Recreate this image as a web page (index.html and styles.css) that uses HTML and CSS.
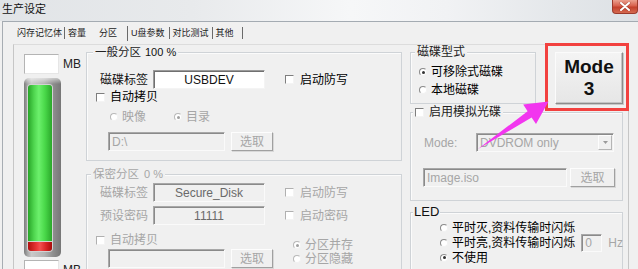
FILE: index.html
```html
<!DOCTYPE html>
<html>
<head>
<meta charset="utf-8">
<link rel="stylesheet" href="styles.css">
</head>
<body>
<div class="titlebar">
  <span class="title">生产设定</span>
  <span class="close"><svg width="12" height="9" viewBox="0 0 12 9"><path d="M2 1 L10 8 M10 1 L2 8" stroke="#5a1a12" stroke-width="3" stroke-linecap="round" opacity=".35"/><path d="M2 1 L10 8 M10 1 L2 8" stroke="#fff" stroke-width="2" stroke-linecap="round"/></svg></span>
</div>
<div class="window">
  <div class="tabs">
    <span class="tab t1">闪存记忆体</span><span class="sep s1"></span>
    <span class="tab t2">容量</span>
    <span class="tab t3">分区</span><span class="sep s3"></span>
    <span class="tab t4">U盘参数</span><span class="sep s4"></span>
    <span class="tab t5">对比测试</span><span class="sep s5"></span>
    <span class="tab t6">其他</span><span class="sep s6"></span>
  </div>
  <div class="page">
    <div class="leftcol">
      <div class="mbrow"><span class="mbbox"></span><span class="mb">MB</span></div>
      <div class="bar"><div class="bar-green"></div><div class="bar-red"></div></div>
      <div class="mbrow mb-bottom"><span class="mbbox"></span><span class="mb">MB</span></div>
    </div>

    <div class="midcol">
      <div class="group g-general">
        <div class="legend lg-general">一般分区 <span class="pct">100 %</span></div>
        <div class="row r-label first">
          <span class="lbl">磁碟标签</span>
          <span class="input in-label">USBDEV</span>
          <span class="opt chk-opt"><i class="chk"></i><span>启动防写</span></span>
        </div>
        <div class="row r-check">
          <span class="opt auto-copy"><i class="chk"></i><span>自动拷贝</span></span>
        </div>
        <div class="row r-radio dis">
          <span class="opt rad-1"><i class="radio"></i><span>映像</span></span>
          <span class="opt rad-2"><i class="radio on"></i><span>目录</span></span>
        </div>
        <div class="row r-path">
          <span class="input dis in-path">D:\</span>
          <span class="btn dis">选取</span>
        </div>
      </div>

      <div class="group g-secure dis">
        <div class="legend lg-secure">保密分区 <span>0 %</span></div>
        <div class="row r-label sec-first">
          <span class="lbl">磁碟标签</span>
          <span class="input dis in-label ro">Secure_Disk</span>
          <span class="opt chk-opt"><i class="chk"></i><span>启动防写</span></span>
        </div>
        <div class="row r-label sec-second">
          <span class="lbl">预设密码</span>
          <span class="input dis in-label ro">11111</span>
          <span class="opt chk-opt"><i class="chk"></i><span>启动密码</span></span>
        </div>
        <div class="sec-bottom">
          <div class="sec-left">
            <div class="row r-check">
              <span class="opt auto-copy"><i class="chk"></i><span>自动拷贝</span></span>
            </div>
            <div class="row r-path sec-path">
              <span class="input dis in-path"></span>
              <span class="btn dis">选取</span>
            </div>
          </div>
          <div class="sec-right">
            <div class="row r-line"><span class="opt"><i class="radio on"></i><span>分区并存</span></span></div>
            <div class="row r-line"><span class="opt"><i class="radio"></i><span>分区隐藏</span></span></div>
          </div>
        </div>
      </div>
    </div>

    <div class="rightcol">
      <div class="top-row">
        <div class="group g-type">
          <div class="legend lg-type">磁碟型式</div>
          <div class="row r-line type-1"><span class="opt"><i class="radio on"></i><span>可移除式磁碟</span></span></div>
          <div class="row r-line type-2"><span class="opt"><i class="radio"></i><span>本地磁碟</span></span></div>
        </div>
        <div class="mode-btn"><span>Mode</span><span>3</span></div>
      </div>

      <div class="group g-cd">
        <div class="legend lg-cd"><i class="chk"></i><span>启用模拟光碟</span></div>
        <div class="row sel-row">
          <span class="mode-lbl">Mode:</span>
          <span class="select"><span class="sel-txt">DVDROM only</span><span class="sel-btn"><svg width="5" height="3" viewBox="0 0 5 3"><path d="M0 0 H5 L2.5 3 Z" fill="#9a9a9a"/></svg></span></span>
        </div>
        <div class="row img-row">
          <span class="input dis in-img">Image.iso</span>
          <span class="btn dis btn-img">选取</span>
        </div>
      </div>

      <div class="group g-led">
        <div class="legend lg-led">LED</div>
        <div class="row r-led led-1"><span class="opt"><i class="radio"></i><span>平时灭,资料传输时闪烁</span></span></div>
        <div class="row r-led"><span class="opt"><i class="radio"></i><span>平时亮,资料传输时闪烁</span></span><span class="input dis in-hz">0</span><span class="hz">Hz</span></div>
        <div class="row r-led"><span class="opt"><i class="radio on"></i><span>不使用</span></span></div>
      </div>
    </div>
  </div>
</div>

<div class="redbox"></div>
<svg class="arrow" width="638" height="269" viewBox="0 0 638 269">
  <polygon points="478,149 531.6,117.6 536,124 548.5,101.5 523.2,104.6 527.6,111.2" fill="#f236ef"/>
</svg>
</body>
</html>
```

FILE: styles.css
```css
* { box-sizing: border-box; }
html, body { margin: 0; padding: 0; }
body {
  width: 638px;
  height: 269px;
  overflow: hidden;
  position: relative;
  background: #f0f0f0;
  font-family: "Liberation Sans", "Noto Sans CJK SC", sans-serif;
  font-size: 12px;
  line-height: 14px;
  color: #000;
  white-space: nowrap;
}
i { display: block; font-style: normal; flex-shrink: 0; }

/* title bar */
.titlebar {
  height: 21px;
  display: flex;
  justify-content: space-between;
  align-items: flex-start;
  background: linear-gradient(90deg, #e1e4e7 0%, #e8eaec 30%, #f6f7f8 55%, #f1f2f4 70%, #e4e7ea 88%, #dde1e5 100%);
}
.title { font-size: 11px; line-height: 14px; margin: 2px 0 0 2px; color: #111; }
.close {
  width: 26px;
  height: 14px;
  display: flex;
  align-items: center;
  justify-content: center;
  background: linear-gradient(#eba08f 0%, #d8614d 45%, #c4402c 55%, #d46a50 100%);
  border: 1px solid #9c3a2c;
  border-top: none;
  border-radius: 0 0 4px 4px;
}

/* window */
.window {
  margin-left: 2px;
  height: 248px;
  border-left: 1px solid #a7adb3;
  border-top: 1px solid #a4abb2;
}
.tabs {
  height: 22px;
  display: flex;
  align-items: center;
  padding-left: 14px;
  font-size: 9px;
  line-height: 12px;
  color: #222;
}
.sep { width: 1px; height: 12px; background: #6a6a6a; }
.s1 { margin-left: 2px; }
.t2 { margin-left: 3px; }
.t3 { margin-left: 13px; }
.s3 { margin-left: 10px; height: 15px; }
.t4 { margin-left: 3px; }
.s4 { margin-left: 4px; }
.t5 { margin-left: 3px; }
.s5 { margin-left: 3px; }
.t6 { margin-left: 3px; }
.s6 { margin-left: 8px; }

.page {
  margin-left: 10px;
  width: 616px;
  height: 226px;
  display: flex;
  align-items: flex-start;
  padding: 7px 5px 0 10px;
  border-left: 1px solid #c6c6c6;
  border-right: 1px solid #c6c6c6;
  border-top: 1px solid #dcdcdc;
}

/* left column */
.leftcol { width: 62px; margin-top: 2px; display: flex; flex-direction: column; flex-shrink: 0; }
.mbrow { display: flex; align-items: center; height: 20px; flex-shrink: 0; }
.mbbox {
  width: 35px; height: 20px; background: #fff;
  border: 1px solid; border-color: #b4b4b4 #e6e6e6 #e6e6e6 #b4b4b4;
}
.mb { margin-left: 4px; font-size: 12px; color: #222; }
.mb-bottom { margin-top: 3px; }
.bar {
  flex-shrink: 0;
  margin-top: 4px;
  width: 37px;
  height: 179px;
  border-radius: 5px;
  padding: 7px 9px 6px 4px;
  display: flex;
  flex-direction: column;
  background:
    linear-gradient(180deg, rgba(255,255,255,.55) 0, rgba(255,255,255,0) 6px),
    linear-gradient(90deg, #7c7c7c 0%, #a9a9a9 10%, #c9c9c9 20%, #b3b3b3 55%, #8f8f8f 78%, #767676 100%);
}
.bar-green {
  flex: 1;
  border-radius: 3px 3px 0 0;
  background: linear-gradient(90deg, #28a428 0%, #4fd64f 25%, #6cf06c 45%, #4ad94a 70%, #2aa82a 100%);
  box-shadow: 0 0 0 1px #d2d2d2;
}
.bar-red {
  height: 9px;
  flex-shrink: 0;
  border-radius: 0 0 3px 3px;
  background: linear-gradient(90deg, #b01010 0%, #e83636 35%, #f25050 50%, #d82424 75%, #a80c0c 100%);
  box-shadow: 0 0 0 1px #d2d2d2;
}

/* groups */
.midcol { width: 316px; display: flex; flex-direction: column; flex-shrink: 0; }
.rightcol { width: 213px; margin-left: 8px; display: flex; flex-direction: column; flex-shrink: 0; }
.group {
  flex-shrink: 0;
  border: 1px solid #cfd3d7;
  box-shadow: inset 1px 1px 0 #fbfbfb;
}
.legend {
  display: flex;
  align-items: center;
  width: fit-content;
  height: 14px;
  margin-top: -8px;
  padding: 0 2px;
  background: #f0f0f0;
  font-size: 11.5px;
  color: #222;
}
.pct { margin-left: 4px; font-size: 11px; color: #111; }
.row { display: flex; align-items: center; flex-shrink: 0; }
.opt { display: flex; align-items: center; flex-shrink: 0; }
.dis, .dis .lbl, .dis .opt { color: #a6a6a6; }

.chk {
  width: 9px; height: 9px; background: #fff;
  border: 1px solid; border-color: #7e7e7e #f4f4f4 #f4f4f4 #7e7e7e;
}
.dis .chk { border-color: #b0b0b0 #f4f4f4 #f4f4f4 #b0b0b0; }
.chk + span { margin-left: 6px; }
.radio {
  width: 8px; height: 8px; border-radius: 50%; background: #fff; position: relative;
  border: 1px solid; border-color: #8a8a8a #f2f2f2 #f2f2f2 #8a8a8a;
}
.dis .radio { border-color: #b8b8b8 #f2f2f2 #f2f2f2 #b8b8b8; }
.radio.on::after {
  content: ""; position: absolute; left: 1.5px; top: 1.5px; width: 3px; height: 3px; border-radius: 50%; background: #333;
}
.dis .radio.on::after { background: #a0a0a0; }
.radio + span { margin-left: 4px; }

.input {
  flex-shrink: 0;
  height: 19px;
  display: flex; align-items: center; justify-content: center;
  background: #fff;
  border: 1px solid; border-color: #9a9a9a #f4f4f4 #f4f4f4 #9a9a9a;
  box-shadow: inset 1px 1px 0 #707070;
  font-size: 12px;
  color: #111;
}
.input.dis { background: #f0f0f0; color: #a6a6a6; border-color: #a8a8a8 #fafafa #fafafa #a8a8a8; box-shadow: inset 1px 1px 0 #8a8a8a; }
.input.ro { color: #6a6a6a; }
.btn {
  flex-shrink: 0;
  width: 42px; height: 19px; margin-left: 6px;
  display: flex; align-items: center; justify-content: center;
  background: #f0f0f0;
  border: 1px solid; border-color: #fdfdfd #a0a0a0 #a0a0a0 #fdfdfd;
  box-shadow: 1px 1px 0 #d8d8d8;
  font-size: 12px;
}

/* general group */
.g-general { height: 109px; }
.lg-general { margin-left: 6px; }
.r-label { height: 19px; }
.r-label.first { margin-top: 11px; }
.lbl { margin-left: 13px; width: 48px; color: #111; }
.in-label { margin-left: 5px; width: 112px; }
.chk-opt { margin-left: 20px; }
.r-check { height: 14px; margin-top: 1px; }
.auto-copy { margin-left: 9px; }
.auto-copy .chk + span { margin-left: 5px; }
.r-radio { height: 14px; margin-top: 6px; }
.rad-1 { margin-left: 23px; }
.rad-2 { margin-left: 28px; }
.r-path { height: 19px; margin-top: 8px; }
.in-path { margin-left: 21px; width: 117px; justify-content: flex-start; padding-left: 3px; }

/* secure group */
.g-secure { margin-top: 13px; height: 120px; }
.lg-secure { margin-left: 4px; color: #a6a6a6; }
.lg-secure span { margin-left: 5px; font-size: 11px; }
.sec-first { margin-top: 2px; }
.sec-second { margin-top: 4px; }
.sec-bottom { display: flex; margin-top: 7px; }
.sec-left { width: 186px; flex-shrink: 0; }
.sec-path { margin-top: 2px; }
.sec-right { margin-left: 12px; margin-top: 6px; }
.r-line { height: 14px; }

/* right column */
.top-row { display: flex; height: 52px; flex-shrink: 0; }
.g-type { width: 126px; height: 52px; }
.lg-type { margin-left: 4px; font-size: 12px; }
.type-1 { margin-top: 6px; }
.type-2 { margin-top: 4px; }
.r-line .opt { margin-left: 8px; }
.mode-btn {
  flex-shrink: 0;
  margin-left: 19px;
  width: 68px; height: 52px;
  display: flex; flex-direction: column; align-items: center; justify-content: center;
  background: linear-gradient(#f4f4f4, #e6e6e6);
  border: 1px solid; border-color: #fbfbfb #8c8c8c #8c8c8c #fbfbfb;
  box-shadow: 1px 1px 0 #c8c8c8, inset -1px -1px 0 #c4c4c4;
  font-weight: bold;
  font-size: 19px;
  line-height: 22px;
  color: #111;
}

.g-cd { margin-top: 8px; height: 89px; }
.lg-cd { margin-left: 2px; font-size: 12px; }
.lg-cd .chk + span { margin-left: 5px; }
.sel-row { height: 19px; margin-top: 14px; }
.mode-lbl { margin-left: 13px; width: 52px; color: #a6a6a6; flex-shrink: 0; }
.select {
  flex-shrink: 0;
  width: 138px; height: 19px;
  display: flex; align-items: stretch;
  background: #f0f0f0;
  border: 1px solid; border-color: #a8a8a8 #fafafa #fafafa #a8a8a8;
  box-shadow: inset 1px 1px 0 #8a8a8a;
}
.sel-txt { flex: 1; padding-left: 3px; display: flex; align-items: center; color: #a6a6a6; }
.sel-btn {
  width: 14px; margin: 1px 1px 1px 0;
  display: flex; align-items: center; justify-content: center;
  border: 1px solid; border-color: #fdfdfd #b5b5b5 #b5b5b5 #fdfdfd;
}
.img-row { height: 19px; margin-top: 16px; }
.in-img { margin-left: 12px; width: 144px; justify-content: flex-start; padding-left: 3px; }
.btn-img { margin-left: 3px; width: 45px; }

.g-led { margin-top: 11px; height: 70px; }
.lg-led { margin-left: 2px; padding: 0 1px; font-size: 13px; color: #111; }
.r-led { height: 15px; }
.led-1 { margin-top: 1px; }
.r-led .opt { margin-left: 29px; }
.in-hz { margin-left: 6px; width: 21px; height: 18px; justify-content: flex-start; padding-left: 3px; }
.hz { margin-left: 6px; color: #a6a6a6; }

/* overlays */
.redbox {
  position: absolute;
  left: 545px; top: 43px;
  width: 84px; height: 68px;
  border: 3px solid #f2413f;
}
.arrow { position: absolute; left: 0; top: 0; pointer-events: none; }
```
